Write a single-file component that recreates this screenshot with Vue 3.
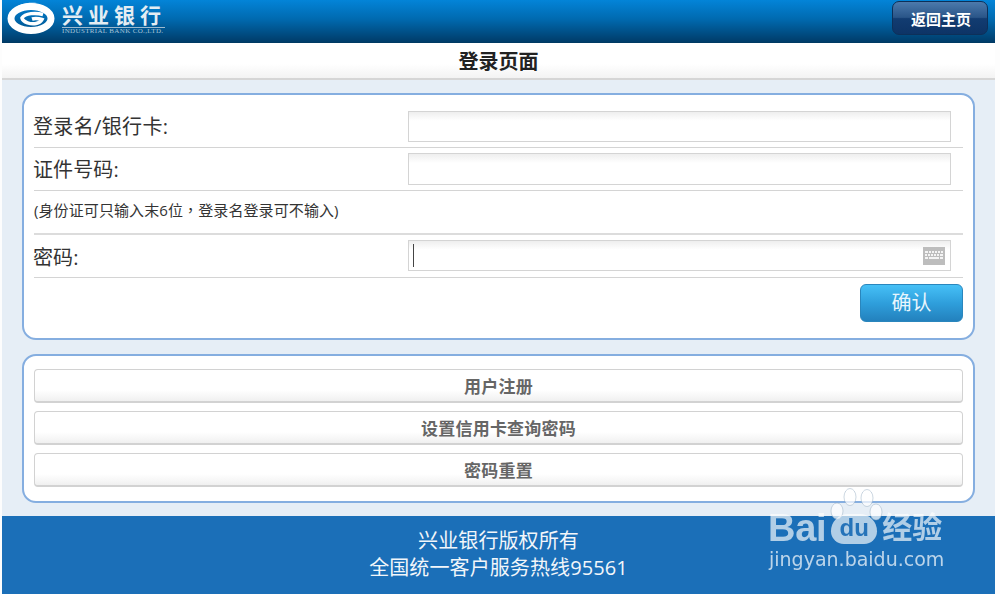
<script setup>
const links = ['用户注册', '设置信用卡查询密码', '密码重置']
</script>

<template>
  <div class="page">
    <header class="top">
      <div class="brand">
        <svg class="mark" width="52" height="33" viewBox="0 0 52 33">
          <ellipse cx="25" cy="16.500" rx="20" ry="12" fill="none" stroke="#fff" stroke-width="7" />
          <path d="M37 12.500C30 10.500 19 11 16 16c1 4.500 9 6.500 14 5.500 3-.6 5-2 6-4-3-1-7-1.500-10-.5" fill="none" stroke="#fff" stroke-width="3.500" />
          <path d="M8 7C13 2 21 0 31 1 22 2 14 4 8 7z" fill="#fff" />
        </svg>
        <div class="wordmark">
          <div class="cn">兴业银行</div>
          <div class="en">INDUSTRIAL BANK CO.,LTD.</div>
        </div>
      </div>
      <button class="home">返回主页</button>
    </header>
    <div class="title">登录页面</div>
    <main class="body">
      <section class="card login">
        <div class="row">
          <label class="wide">登录名/银行卡:</label>
          <div class="input in1"></div>
        </div>
        <div class="row">
          <label>证件号码:</label>
          <div class="input in2"></div>
        </div>
        <div class="row note"><span>(身份证可只输入末6位<span class="tc">，</span>登录名登录可不输入)</span></div>
        <div class="row">
          <label class="pw">密码:</label>
          <div class="input pass">
            <span class="caret"></span>
            <svg class="kbd" width="22" height="18" viewBox="0 0 22 18">
              <rect width="22" height="18" fill="#bdbdbd" />
              <g fill="#f4f4f4">
                <rect x="2" y="4" width="3" height="2" /><rect x="6" y="4" width="2" height="2" /><rect x="9" y="4" width="2" height="2" /><rect x="12" y="4" width="2" height="2" /><rect x="15" y="4" width="2" height="2" /><rect x="18" y="4" width="2" height="2" />
                <rect x="2" y="7" width="2" height="2" /><rect x="5" y="7" width="2" height="2" /><rect x="8" y="7" width="2" height="2" /><rect x="11" y="7" width="2" height="2" /><rect x="14" y="7" width="2" height="2" /><rect x="17" y="7" width="3" height="2" />
                <rect x="2" y="10" width="3" height="2" /><rect x="6" y="10" width="10" height="2" /><rect x="17" y="10" width="3" height="2" />
              </g>
            </svg>
          </div>
        </div>
        <div class="actions"><button class="confirm">确认</button></div>
      </section>
      <section class="card links">
        <button v-for="l in links" :key="l" class="link">{{ l }}</button>
      </section>
    </main>
    <footer class="foot">
      <div>兴业银行版权所有</div>
      <div>全国统一客户服务热线95561</div>
    </footer>
    <div class="wm">
      <svg class="paw" width="58" height="44" viewBox="0 0 58 44">
        <g fill="#fff" fill-opacity=".72" stroke="#8fa6bd" stroke-opacity=".45">
          <ellipse cx="7" cy="24" rx="6" ry="8" />
          <ellipse cx="20" cy="10" rx="6" ry="8.500" />
          <ellipse cx="37" cy="11" rx="6" ry="8.500" />
          <ellipse cx="46" cy="25" rx="6" ry="8" />
        </g>
      </svg>
      <div class="wm-main"><span class="ba">Bai</span><span class="du"><span>du</span></span><span class="wm-cn">经验</span></div>
      <div class="wm-url">jingyan.baidu.com</div>
    </div>
  </div>
</template>

<style>
html, body { margin: 0; background: #fdfdfd; }
</style>

<style scoped>
.page {
  position: relative;
  width: 993px;
  height: 594px;
  margin-left: 2px;
  overflow: hidden;
  font-family: "Open Sans", "Noto Sans CJK SC", sans-serif;
  display: flex;
  flex-direction: column;
  background: #e6eef6;
}
.top {
  height: 43px;
  flex: none;
  box-sizing: border-box;
  display: flex;
  justify-content: space-between;
  align-items: flex-start;
  background: linear-gradient(#0384d8, #006ab0 45%, #003c69);
  border-bottom: 1px solid #003a63;
}
.brand { display: flex; margin: 1px 0 0 4px; }
.mark { display: block; margin-top: 1px; filter: blur(.5px); }
.wordmark { margin-left: 4px; color: #e4edf3; }
.cn {
  font-family: "Noto Sans CJK SC", serif;
  font-weight: 700;
  font-size: 21px;
  letter-spacing: 5px;
  line-height: 26px;
  width: 103px;
  white-space: nowrap;
  border-bottom: 1px solid #9dbbd0;
}
.en {
  font-family: "Liberation Serif", serif;
  font-size: 7px;
  line-height: 7px;
  letter-spacing: .35px;
  white-space: nowrap;
  color: #a9c3d6;
}
.home {
  width: 96px;
  height: 34px;
  margin: 1px 7px 0 0;
  padding: 0 0 0 2px;
  border: 1px solid #0d3059;
  border-radius: 7px;
  background: linear-gradient(#4c7aac, #2a5588 48%, #123c71 52%, #0d3466);
  color: #fff;
  font: 700 15px "Open Sans", "Noto Sans CJK SC", sans-serif;
}
.title {
  height: 37px;
  flex: none;
  box-sizing: border-box;
  line-height: 37px;
  text-align: center;
  font-size: 20px;
  font-weight: 700;
  color: #222;
  background: linear-gradient(#fff 60%, #f3f3f3);
  border-bottom: 2px solid #d6d6d6;
}
.body {
  flex: 1;
  padding: 13px 20px;
  display: flex;
  flex-direction: column;
  gap: 14px;
}
.card {
  box-sizing: border-box;
  width: 953px;
  background: #fff;
  border: 2px solid #85aee0;
  border-radius: 14px;
  padding: 0 10px;
}
.login { height: 247px; padding-top: 10px; }
.links {
  height: 149px;
  padding-top: 13px;
  display: flex;
  flex-direction: column;
  gap: 8px;
}
.row {
  height: 43px;
  box-sizing: border-box;
  display: flex;
  align-items: center;
  border-bottom: 1px solid #d4d4d4;
  color: #333;
  font-size: 20px;
}
label { width: 374px; flex: none; margin-left: -1px; margin-right: 1px; padding-bottom: 2px; letter-spacing: .1px; }
.wide { letter-spacing: .35px; }
.pw { padding-bottom: 0; }
.note {
  font-size: 15px;
  letter-spacing: .1px;
  border-bottom-width: 2px;
  border-bottom-color: #dcdcdc;
  height: 44px;
  padding-bottom: 5px;
}
.tc { font-family: "Noto Sans CJK TC", sans-serif; }
.input {
  box-sizing: border-box;
  width: 543px;
  border: 1px solid #d4d4d4;
  background: linear-gradient(#eee, #fff 30%);
  display: flex;
  align-items: center;
  justify-content: space-between;
}
.in1 { height: 31px; margin-top: 1px; }
.in2 { height: 32px; }
.pass { height: 31px; margin-top: -1px; }
.caret { width: 1px; height: 23px; margin-left: 4px; background: #444; }
.kbd { margin-right: 5px; }
.actions { display: flex; justify-content: flex-end; padding-top: 6px; }
.confirm {
  width: 103px;
  height: 38px;
  padding: 0 0 3px;
  border: 1px solid #2a86bd;
  border-radius: 6px;
  background: linear-gradient(#46c0f6, #2f9fdc 50%, #2381bd);
  color: #e8f6fd;
  font: 400 20px "Open Sans", "Noto Sans CJK SC", sans-serif;
}
.link {
  height: 34px;
  flex: none;
  padding: 0 0 1px;
  border: 1px solid #d2d2d2;
  border-bottom-width: 2px;
  border-radius: 4px;
  background: linear-gradient(#fff 65%, #f0f0f0);
  color: #666;
  font: 700 17px "Open Sans", "Noto Sans CJK SC", sans-serif;
  letter-spacing: .2px;
}
.foot {
  height: 78px;
  flex: none;
  box-sizing: border-box;
  padding-top: 11px;
  background: #1b6fb8;
  color: #f2f6fa;
  text-align: center;
  font-size: 20px;
  line-height: 27px;
  letter-spacing: .1px;
}
.wm {
  position: absolute;
  left: 766px;
  top: 486px;
  width: 190px;
  color: #fff;
  font-family: "Liberation Sans", "Noto Sans CJK SC", sans-serif;
}
.paw { position: absolute; left: 62px; top: 1px; }
.wm-main {
  position: absolute;
  left: 0;
  top: 22px;
  display: flex;
  align-items: center;
  white-space: nowrap;
  height: 40px;
  opacity: .66;
}
.ba { font-size: 38px; font-weight: 700; line-height: 40px; letter-spacing: -.3px; }
.du {
  display: block;
  width: 46px;
  height: 30px;
  margin: 2px 0 0 5px;
  background: #fff;
  border-radius: 20px 20px 15px 15px;
  text-align: center;
  line-height: 27px;
}
.du span { color: #2b76ba; font-size: 24px; font-weight: 700; }
.wm-cn { font-size: 30px; line-height: 34px; font-weight: 700; margin-left: 5px; }
.wm-url {
  position: absolute;
  left: 1px;
  top: 62px;
  font-family: "DejaVu Sans", sans-serif;
  font-size: 19px;
  line-height: 22px;
  opacity: .7;
  white-space: nowrap;
}
</style>
